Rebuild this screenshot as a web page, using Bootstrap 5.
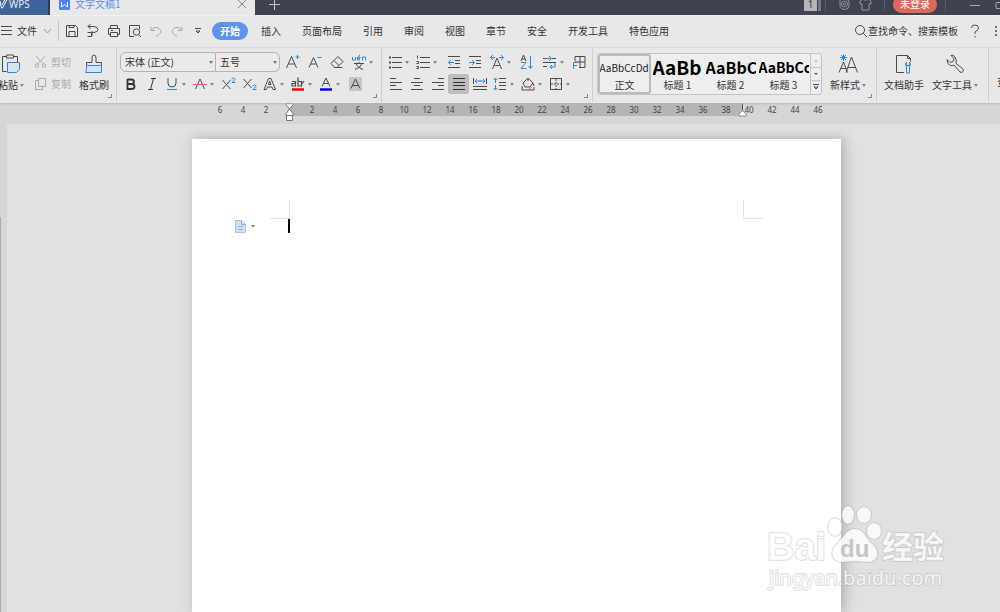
<!DOCTYPE html>
<html lang="zh-CN">
<head>
<meta charset="utf-8">
<meta name="viewport" content="width=device-width, initial-scale=1">
<title>文字文稿1 - WPS</title>
<link href="https://cdn.jsdelivr.net/npm/bootstrap@5.3.0/dist/css/bootstrap.min.css" rel="stylesheet">
<style>
body{font:10px/14px "Noto Sans","Noto Sans CJK SC",sans-serif;color:#333;background:#e1e1e1}
button{border:0;background:none;padding:0;color:inherit}
svg{fill:none;stroke:#4a4a4a;stroke-width:1;flex:none;display:block}
.b{stroke:#2f86dc}
.cjk{font-family:"Noto Sans CJK SC",sans-serif}
/* title bar */
.titlebar{height:15px;background:#404250}
.titlebar .line{height:8px}
.wps-home{width:50px;background:#41639c;color:#e4eaf4;border-right:2px solid #35394a!important}
.doc-tab{width:205px;background:#e8e8e8;color:#5a90ea}
.new-tab{margin-left:14px}
.login-pill{width:44px;height:17px;background:#da6a5c;color:#fff;border-radius:9px}
.num-box{width:13px;height:14px;background:#b5b5b8;color:#333}
.num-side{width:3px;height:14px;background:#77777f;margin-left:1px}
.tsep{width:1px;height:14px;background:#5c5e6a}
.gap-mid{margin-left:12px}
/* menu bar */
.menubar{height:33px;background:#e8e8e8;border-bottom:1px solid #dcdcdc;border-top:1px solid #f0f0f0;padding-bottom:2px}
.msep{width:1px;height:20px;background:#c4c4c4;margin:0 2px 0 6px}
.menubar .chev{margin-left:2px}
.menu-tabs{gap:21px}
.menu-tabs a{color:#333;text-decoration:none}
.menu-tabs a.current{background:#5d93ea;color:#fff;font-weight:700;border-radius:9px;padding:2px 8px;margin-right:-8px}
.search-box{width:94px;border:0;background:none;padding:0;color:#333}
.search-box::placeholder{color:#333;opacity:1}
/* ribbon */
.ribbon{height:55px;background:#e8e8e8;box-shadow:0 1px 2px #b8b8b8;position:relative;z-index:2}
.rgroup{border-right:1px solid #cfcfcf;padding:3px 3px 0;height:54px;position:relative;flex:none}
.corner-mark{position:absolute;right:4px;bottom:4px;width:4px;height:4px;border:solid #888;border-width:0 1px 1px 0}
.rrow{height:22px}
.near{margin-left:2px}
.tb{width:21px;height:20px;flex:none;display:flex;align-items:center;justify-content:center;border-radius:2px}
.tb.drop{width:28px;justify-content:flex-start;padding-left:2px}
.tb.on{background:#bdbdbd}
.drop::after{content:"";border:solid transparent;border-width:3px 2px 0;border-top-color:#888;margin-left:2px;flex:none}
.big{display:flex;flex-direction:column;align-items:center;height:44px;gap:3px;padding-top:2px}
.big .drop{display:flex;align-items:center}
.clip-tools{margin-left:10px}
.off{color:#aaa}.off svg{stroke:#aaa}
.combo{appearance:none;border:1px solid #b4b4b4;height:20px;background:#ebebeb;color:#333;padding:0 0 0 4px;font-size:10px;line-height:16px}
.combo-wrap{position:relative}
.combo-wrap::after{content:"";position:absolute;right:3px;top:9px;border:solid transparent;border-width:3px 2px 0;border-top-color:#777}
.gallery{border:1px solid #c4c4c4;border-radius:3px;background:#eee;height:42px;margin:2px 0 0 1px}
.style-item{width:53px;height:40px;overflow:hidden;display:flex;flex-direction:column;align-items:center;white-space:nowrap}
.style-item.on{border:2px solid #bbb;border-radius:3px}
.sample{width:50px;height:24px;line-height:26px;overflow:hidden;text-align:left;color:#000;font-weight:700}
.style-item.on .sample{font:10px/24px "Noto Sans CJK SC",sans-serif;height:22px;color:#222}
.sample.h-one{font-size:19px}.sample.h-two{font-size:16px}.sample.h-three{font-size:14px}
.scroller{width:11px;border-left:1px solid #c4c4c4}
.scroller button{height:13px;display:flex;align-items:center;justify-content:center;width:10px}
.scroller button+button{border-top:1px solid #c4c4c4}
/* ruler and sheet share one centred column */
.ruler{height:21px;background:#d6d6d6;padding-left:32px}
.sheet-col{width:649px;margin:0 auto}
.ruler .sheet-col{padding-left:17px;height:14px;background:linear-gradient(#b5b5b5,#b5b5b5) 97px 0/453px 13px no-repeat;position:relative}
.ruler span{width:23px;text-align:center;font-size:8px;line-height:14px;color:#444;flex:none}
.mark-l,.mark-r{position:absolute;top:0}.mark-l{left:93px}.mark-r{left:546px}
.work{background:#e1e1e1;position:relative;padding-left:25px}
.edge{width:7px;background:#d6d6d6;padding-top:93px;position:absolute;left:0;top:0;bottom:0}
.edge div{width:1px;height:100%;background:#aaa}
.sheet{background:#fff;margin-top:15px;padding:60px 78px 0;box-shadow:3px 0 12px #aaa}
.crop{width:20px;height:20px;border:0 solid #c8c8c8}
.caret-line{width:2px;height:14px;background:#000}
.paste-opt{margin:0 32px 0 -36px;width:22px;height:14px}
.paste-opt::after{margin-left:4px}
.watermark{position:absolute;right:45px;bottom:12px}
.watermark text,.watermark ellipse,.watermark path{fill:#fff;fill-opacity:.8;stroke:#999;stroke-opacity:.3;stroke-width:2;paint-order:stroke;stroke-linejoin:round}
.watermark .wm-dark{fill:#c6c6c6;fill-opacity:1;stroke:none}
</style>
</head>
<body class="vh-100 d-flex flex-column overflow-hidden">
<header>
 <div class="titlebar d-flex overflow-hidden">
  <button class="wps-home d-flex"><span class="line d-flex align-items-center"><svg width="9" height="14" viewBox="0 0 9 14" style="stroke:#fff"><path d="M0 4l1.500 7h1L7 2.500H5L2 8"/></svg><span>WPS</span></span></button>
  <div class="doc-tab"><div class="line d-flex align-items-center ps-2">
   <svg width="13" height="14" viewBox="0 0 13 14"><rect x="1" y="0" width="11" height="13" rx="1" fill="#4d86ee" stroke="none"/><path d="M3.500 5v5l3-2.500 3 2.500V5" stroke="#fff"/></svg>
   <span class="ms-1 cjk">文字文稿1</span>
   <button class="ms-auto me-2" aria-label="关闭"><svg width="10" height="10" viewBox="0 0 10 10"><path d="M1 1l8 8M9 1l-8 8" stroke="#888"/></svg></button></div></div>
  <button class="line d-flex align-items-center new-tab" aria-label="新建"><svg width="11" height="11" viewBox="0 0 11 11"><path d="M5.500 0v11M0 5.500h11" stroke="#ccc"/></svg></button>
  <div class="line d-flex align-items-center ms-auto">
   <span class="num-box text-center">1</span><span class="num-side"></span><span class="tsep ms-1"></span>
   <svg class="gap-mid" width="13" height="14" viewBox="0 0 13 14" style="stroke:#92939c"><path d="M2 0v9q0 3 5 3.500 4-.500 4-4V4L8 2"/><circle cx="6.500" cy="7" r="3"/><circle cx="6.500" cy="7" r="1"/></svg>
   <svg class="ms-2" width="13" height="14" viewBox="0 0 13 14" style="stroke:#92939c"><path d="M4 2L1 4v3h2v6h7V7h2V4L9 2q-2.500 3-5 0z"/></svg>
   <span class="tsep gap-mid me-2"></span>
   <button class="login-pill cjk">未登录</button>
   <span class="tsep ms-2 me-4"></span>
   <svg width="30" height="14" viewBox="0 0 30 14"><path d="M0 8.500h10M30 5.500h-3q-1 0-1 1v4q0 1 1 1h3" stroke="#aaa"/></svg>
  </div>
 </div>
 <nav class="menubar d-flex align-items-center cjk">
  <button class="d-flex align-items-center gap-1"><svg width="13" height="12" viewBox="0 0 13 12"><path d="M1 1.500h11M1 5.500h11M1 9.500h11"/></svg><span>文件</span><svg class="chev" width="9" height="8" viewBox="0 0 9 8"><path d="M1 2l3.500 4L8 2" stroke="#999"/></svg></button>
  <span class="msep"></span>
  <button class="tb" aria-label="保存"><svg width="14" height="14" viewBox="0 0 14 14"><path d="M1.500 1.500h9l2 2v9h-11zM4 12.500v-5h6v5M4 1.500v2h5v-2"/></svg></button>
  <button class="tb" aria-label="输出"><svg width="14" height="14" viewBox="0 0 14 14"><path d="M2 2.500h6q4 .500 4 3t-4 3H6M4.500 0L2 2.500 4.500 5M1.500 8.500h4v4h-4M6 7v5"/></svg></button>
  <button class="tb" aria-label="打印"><svg width="14" height="14" viewBox="0 0 14 14"><path d="M3.500 4.500v-3h7v3M3.500 10.500h-2v-6h11v6h-2M3.500 8.500h7v4h-7zM4 6.500h2"/></svg></button>
  <button class="tb" aria-label="打印预览"><svg width="14" height="14" viewBox="0 0 14 14"><path d="M6 12.500H1.500v-11h10V5M10.500 10.500L13 13"/><circle cx="8.500" cy="8" r="3.200"/></svg></button>
  <button class="tb off" aria-label="撤销"><svg width="14" height="14" viewBox="0 0 14 14"><path d="M2 2.500v4h4M2 6.500q4-5 8-2t0 6l-3 2"/></svg></button>
  <button class="tb off" aria-label="恢复"><svg width="14" height="14" viewBox="0 0 14 14"><path d="M12 2.500v4H8M12 6.500q-4-5-8-2t0 6l3 2"/></svg></button>
  <button class="tb me-1" aria-label="更多"><svg width="8" height="8" viewBox="0 0 8 8"><path d="M1 1.500h6M2 4l2 2 2-2z"/></svg></button>
  <div class="menu-tabs d-flex align-items-center text-nowrap"><a class="current" href="#">开始</a><a href="#">插入</a><a href="#">页面布局</a><a href="#">引用</a><a href="#">审阅</a><a href="#">视图</a><a href="#">章节</a><a href="#">安全</a><a href="#">开发工具</a><a href="#">特色应用</a></div>
  <label class="d-flex align-items-center ms-auto"><svg width="14" height="14" viewBox="0 0 14 14"><circle cx="6" cy="6" r="4.500"/><path d="M9 9l4 4"/></svg><input class="search-box" type="text" placeholder="查找命令、搜索模板" aria-label="查找命令"></label>
  <button class="mx-2" aria-label="帮助"><svg width="10" height="14" viewBox="0 0 10 14"><path d="M1.500 4q0-3 3.500-3t3.500 3Q8.500 6 5 8v2M5 12v1.500"/></svg></button>
  <button class="ms-1" aria-label="更多"><svg width="8" height="14" viewBox="0 0 8 14"><path d="M4 2v2M4 6v2M4 10v2" stroke-width="1.500"/></svg></button>
 </nav>
 <div class="ribbon d-flex overflow-hidden cjk">
  <section class="rgroup d-flex ps-0" style="width:117px">
   <button class="big text-nowrap" style="margin-left:-2px"><svg width="22" height="22" viewBox="0 0 22 22"><path d="M7 3.500H2.500v15h4M13 3.500h4.500V9M6.500 2h7v3h-7z"/><path class="b" d="M7.500 9.500h12v7l-3 3h-9z" fill="#d5e4f3"/></svg><span class="drop">粘贴</span></button>
   <div class="clip-tools">
    <button class="rrow off d-flex align-items-center gap-1"><svg width="13" height="14" viewBox="0 0 13 14"><path d="M2 1l7.500 8M11 1L3.500 9"/><circle cx="3" cy="10.500" r="1.700"/><circle cx="10" cy="10.500" r="1.700"/></svg>剪切</button>
    <button class="rrow off d-flex align-items-center gap-1"><svg width="13" height="14" viewBox="0 0 13 14"><path d="M4.500 1.500h7v8h-7zM4.500 3.500h-3v9h7v-3"/></svg>复制</button>
   </div>
   <button class="big text-nowrap ms-2"><svg width="20" height="22" viewBox="0 0 20 22"><path d="M2.500 12V9.500h5.500V5q0-3 2-3t2 3v4.500h5.500V12"/><path class="b" d="M2.500 12.500h15v7h-16l1-3z" fill="#d5e4f3"/></svg>格式刷</button>
   <i class="corner-mark"></i>
  </section>
  <section class="rgroup" style="width:265px">
   <div class="rrow d-flex align-items-center">
    <div class="combo-wrap"><select class="combo rounded-start cjk" style="width:96px" aria-label="字体"><option>宋体 (正文)</option></select></div>
    <div class="combo-wrap"><select class="combo rounded-end border-start-0 cjk" style="width:64px" aria-label="字号"><option>五号</option></select></div>
    <div class="d-flex near" style="gap:1px">
    <button class="tb" aria-label="增大字号"><svg width="16" height="16" viewBox="0 0 16 16"><path d="M1.500 14L6.500 2.500 11.500 14M3.500 10h6"/><path class="b" d="M12.500 1v4M10.500 3h4"/></svg></button>
    <button class="tb" aria-label="减小字号"><svg width="16" height="16" viewBox="0 0 16 16"><path d="M2 13.500L6.500 3.500l4.500 10M4 10h5"/><path class="b" d="M10.500 3.500h4"/></svg></button>
    <button class="tb" aria-label="清除格式"><svg width="16" height="16" viewBox="0 0 16 16"><path d="M2 9.500l7-7 5 5-6 6H5.500zM5 6.500l5 5M5.500 13.500H13"/></svg></button>
    <button class="tb drop" aria-label="拼音指南"><svg width="17" height="17" viewBox="0 0 17 17"><path d="M4 9.500h10M9 8v2M5 15.500q6-2 7-6M6 10q2 4 7 5.500"/><path class="b" d="M2.500 3v3h3V3M7 4.500h3V3H7.500v3H10M9 2l1-1.500M12.500 6.500V3h3v3.500"/></svg></button></div>
   </div>
   <div class="rrow d-flex align-items-center">
    <button class="tb" aria-label="加粗"><svg width="16" height="16" viewBox="0 0 16 16"><path d="M4.500 3v10h4q3 0 3-2.500T8.500 8h-4M4.500 3.500h3.500q3 0 3 2.200T8 8" stroke="#333" stroke-width="1.800"/></svg></button>
    <button class="tb" aria-label="倾斜"><svg width="16" height="16" viewBox="0 0 16 16"><path d="M7 2.500h5M4 13.500h5M9.500 2.500l-3 11" stroke="#333"/></svg></button>
    <button class="tb drop" aria-label="下划线"><svg width="16" height="16" viewBox="0 0 16 16"><path d="M4 2v5q0 4 4 4t4-4V2"/><path class="b" d="M3 13.500h10"/></svg></button>
    <button class="tb drop" aria-label="删除线"><svg width="16" height="16" viewBox="0 0 16 16"><path d="M3.500 13L8 3l4.500 10"/><path d="M1 8.500h14" stroke="#e06060"/></svg></button>
    <button class="tb" aria-label="上标"><svg width="16" height="16" viewBox="0 0 16 16"><path d="M1.500 4l8 9M9.500 4l-8 9"/><path class="b" d="M11 3.500q0-1.500 1.500-1.500t1.500 1.500L11 6.500h3.500"/></svg></button>
    <button class="tb" aria-label="下标"><svg width="16" height="16" viewBox="0 0 16 16"><path d="M1.500 3l8 9M9.500 3l-8 9"/><path class="b" d="M11 10.500Q11 9 12.500 9t1.500 1.500L11 13.500h3.500"/></svg></button>
    <button class="tb drop" aria-label="文字效果"><svg width="16" height="16" viewBox="0 0 16 16"><path d="M2 13.500L6.500 2.500h2.500L13.500 13.500H11L10 11H5.500l-1 2.500zM6.500 8.500l1.250-3.500L9 8.500z"/></svg></button>
    <button class="tb drop" aria-label="突出显示"><svg width="16" height="16" viewBox="0 0 16 16"><path d="M2 5.500h3.500V10H2V7.500h3.500M8 1.500V10h3.500V5.500H8M11 9l3-4" stroke-width="1.200"/><path d="M2 13.500h12" stroke="#f00" stroke-width="2.500"/></svg></button>
    <button class="tb drop" aria-label="字体颜色"><svg width="16" height="16" viewBox="0 0 16 16"><path d="M4 10.500L8 2l4 8.500M5.500 7.500h5"/><path d="M2 13.500h12" stroke="#00f" stroke-width="2.500"/></svg></button>
    <button class="tb" aria-label="字符底纹"><svg width="16" height="16" viewBox="0 0 16 16"><path d="M2 1h13v14H2z" fill="#c6c6c6" stroke="none"/><path d="M4 12.500L8.500 3l4.500 9.500M5.500 9.500h6"/></svg></button>
   </div><i class="corner-mark"></i>
  </section>
  <section class="rgroup" style="width:211px">
   <div class="rrow d-flex align-items-center">
    <button class="tb drop" aria-label="项目符号"><svg width="16" height="16" viewBox="0 0 16 16"><path d="M5 3.500h10M5 8.500h10M5 13.500h10"/><path d="M2 3.500h2M2 8.500h2M2 13.500h2" stroke-width="2"/></svg></button>
    <button class="tb drop" aria-label="编号"><svg width="16" height="16" viewBox="0 0 16 16"><path d="M5 3.500h10M5 8.500h10M5 13.500h10M2.500 1.500v3M1.500 7.500h2v2h-2M1.500 12.500h2v2h-2"/></svg></button>
    <button class="tb near" aria-label="减少缩进"><svg width="16" height="16" viewBox="0 0 16 16"><path d="M2 2.500h12M9 6.500h5M9 9.500h5M2 13.500h12"/><path class="b" d="M8 8.500H2.500M5 6L2.500 8.500 5 11"/></svg></button>
    <button class="tb" aria-label="增加缩进"><svg width="16" height="16" viewBox="0 0 16 16"><path d="M2 2.500h12M9 6.500h5M9 9.500h5M2 13.500h12"/><path class="b" d="M2 8.500h5.500M5 6l2.500 2.500L5 11"/></svg></button>
    <button class="tb drop near" aria-label="字符缩放"><svg width="16" height="16" viewBox="0 0 16 16"><path d="M3.500 15L8 4l4.500 11M5.500 11.500h5"/><path class="b" d="M6 3.500H1.500M4 1L1.500 3.500 4 6M10 3.500h4.500M12 1l2.500 2.500L12 6"/></svg></button>
    <button class="tb" aria-label="排序"><svg width="16" height="16" viewBox="0 0 16 16"><path d="M3 7l2.500-6L8 7M4 5h3"/><path class="b" d="M3 8.500h5l-5 6h5.500M12.500 2v12M10.500 12l2 2.500 2-2.500"/></svg></button>
    <button class="tb drop ms-1" aria-label="换行"><svg width="16" height="16" viewBox="0 0 16 16"><path d="M1 4.500h3M10 4.500h4M1 8.500h13M1 12.500h4"/><path class="b" d="M3 4.500h6M7 2l2.500 2.500L7 7M13 9v4H8M10 11l-2 2 2 2"/></svg></button>
    <button class="tb" aria-label="表格边框"><svg width="16" height="16" viewBox="0 0 16 16"><path d="M4 7V2.500h10v11H8M9 2.500v11M4 8h10"/><path class="b" d="M2.500 15V8.500H7M2.500 11.500H6"/></svg></button>
   </div>
   <div class="rrow d-flex align-items-center">
    <button class="tb" aria-label="左对齐"><svg width="16" height="16" viewBox="0 0 16 16"><path d="M2 2.500h6M2 6.500h12M2 9.500h6M2 13.500h12"/></svg></button>
    <button class="tb" aria-label="居中"><svg width="16" height="16" viewBox="0 0 16 16"><path d="M5 2.500h6M2 6.500h12M5 9.500h6M2 13.500h12"/></svg></button>
    <button class="tb" aria-label="右对齐"><svg width="16" height="16" viewBox="0 0 16 16"><path d="M8 2.500h6M2 6.500h12M8 9.500h6M2 13.500h12"/></svg></button>
    <button class="tb on" aria-label="两端对齐"><svg width="16" height="16" viewBox="0 0 16 16" style="stroke:#333"><path d="M2 2.500h12M2 6.500h12M2 9.500h12M2 13.500h12"/></svg></button>
    <button class="tb" aria-label="分散对齐"><svg width="16" height="16" viewBox="0 0 16 16"><path d="M1.500 2v6M14.500 2v6M1 10.500h14M1 13.500h14"/><path class="b" d="M3 5h10M5 3L3 5l2 2M11 3l2 2-2 2M8 4v2"/></svg></button>
    <button class="tb drop" aria-label="行距"><svg width="16" height="16" viewBox="0 0 16 16"><path d="M7 2.500h7M7 6.500h7M7 9.500h7M7 13.500h7"/><path class="b" d="M3.500 2v5M1.500 4l2-2 2 2M3.500 9v5M1.500 12l2 2 2-2"/></svg></button>
    <button class="tb drop" aria-label="底纹颜色"><svg width="16" height="16" viewBox="0 0 16 16"><path d="M3 7l5-5 5 5-3 4H5zM8 2v3M13 7l1 3M2 10v4h12v-3"/><path d="M8 14l4-3" stroke="#e06060"/></svg></button>
    <button class="tb drop" aria-label="边框"><svg width="16" height="16" viewBox="0 0 16 16"><path d="M2.500 2.500h11v11h-11z"/><path d="M8 3v10M3 8h10" stroke-dasharray="2 1"/></svg></button>
   </div><i class="corner-mark"></i>
  </section>
  <section class="rgroup d-flex" style="width:284px">
   <div class="gallery d-flex">
    <button class="style-item on"><span class="sample">AaBbCcDd</span><span>正文</span></button>
    <button class="style-item"><span class="sample h-one">AaBb</span><span>标题 1</span></button>
    <button class="style-item"><span class="sample h-two">AaBbC</span><span>标题 2</span></button>
    <button class="style-item"><span class="sample h-three">AaBbCc</span><span>标题 3</span></button>
    <div class="scroller"><button aria-label="上"><svg width="6" height="4" viewBox="0 0 6 4"><path d="M1 3l2-2 2 2z" fill="#bbb" stroke="none"/></svg></button><button aria-label="下"><svg width="6" height="4" viewBox="0 0 6 4"><path d="M1 1l2 2 2-2z" fill="#555" stroke="none"/></svg></button><button aria-label="展开"><svg width="6" height="6" viewBox="0 0 6 6"><path d="M0 .500h6M1 3l2 2 2-2z"/></svg></button></div>
   </div>
   <button class="big text-nowrap ms-2"><svg width="22" height="22" viewBox="0 0 22 22"><path d="M2 19.500L6.500 9l4 10.500M4 15.500h5M9 19.500L14.500 4 20.500 19.500M11 14.500h7.500"/><path class="b" d="M6.500 1v7M3 4.500h7M4 2l5 5M9 2L4 7"/></svg><span class="drop">新样式</span></button>
   <i class="corner-mark"></i>
  </section>
  <section class="rgroup d-flex gap-2 text-nowrap" style="width:112px">
   <button class="big ms-1"><svg width="22" height="22" viewBox="0 0 22 22"><path d="M11 19.500H3.500v-17h11l3 3v3M14.500 2.500v3h3"/><path class="b" d="M13.500 9q-2 2 0 5v6h3v-6q2-3 0-5v3.500h-3z"/></svg>文档助手</button>
   <button class="big"><svg width="22" height="22" viewBox="0 0 22 22"><path d="M7 2.500l3 3-1 3-3 1-3-3q0 5 3.500 6 2 .500 3.500-.500l6 7q2 1 3-.500t-.500-3L12 10.500Q13 7 11 4T7 2.500z"/></svg><span class="drop">文字工具</span></button>
  </section>
  <button class="big text-nowrap ms-2"><svg width="20" height="22"></svg>查找替换</button>
 </div>
</header>
<div class="ruler"><div class="sheet-col d-flex"><span>6</span><span>4</span><span>2</span><span></span><span>2</span><span>4</span><span>6</span><span>8</span><span>10</span><span>12</span><span>14</span><span>16</span><span>18</span><span>20</span><span>22</span><span>24</span><span>26</span><span>28</span><span>30</span><span>32</span><span>34</span><span>36</span><span>38</span><span>40</span><span>42</span><span>44</span><span>46</span>
 <svg class="mark-l" width="9" height="19" viewBox="0 0 9 19"><path d="M1 .500h7v1.500L4.500 6 1 2zM4.500 6L8 10.500v2H1v-2zM1.500 12.500h6v5h-6z" fill="#fff" stroke="#777"/></svg>
 <svg class="mark-r" width="9" height="14" viewBox="0 0 9 14"><path d="M4.500 0v8"/><path d="M4.500 7.500L8 11v2H1v-2z" fill="#fff" stroke="#888"/></svg></div></div>
<main class="work flex-grow-1 d-flex ps-4 overflow-hidden">
 <div class="edge"><div></div></div>
 <div class="ms-2 flex-grow-1 d-flex"><article class="sheet-col sheet">
  <div class="d-flex justify-content-between"><div class="crop border-end border-bottom"></div><div class="crop border-start border-bottom"></div></div>
  <div class="d-flex align-items-center"><button class="paste-opt d-flex align-items-center drop" aria-label="粘贴选项"><svg width="13" height="13" viewBox="0 0 13 13"><path d="M1.500.500h6l4 4v8h-10z" fill="#d3e1f5" stroke="#a9c1e6"/><path d="M7.500.500v4h4M4 6.500h5M4 9.500h5" stroke="#8fb0df"/></svg></button><span class="caret-line"></span></div>
 </article></div>
 <svg class="watermark" width="190" height="100" viewBox="0 0 190 100">
  <text x="2" y="60" font-family="Liberation Sans" font-weight="700" font-size="38">Bai</text>
  <ellipse cx="70" cy="27" rx="7" ry="9"/><ellipse cx="83" cy="15" rx="6" ry="9"/><ellipse cx="99" cy="15" rx="7" ry="8"/><ellipse cx="109" cy="31" rx="7" ry="8"/>
  <path d="M90 29c9 0 10 8 17 15 8 6 7 18-4 18-5 0-8-1-13-1s-8 1-13 1c-11 0-12-11-6-17 8-8 10-16 19-16z"/>
  <text class="wm-dark" x="75" y="57" font-family="Liberation Sans" font-weight="700" font-size="24">du</text>
  <text x="117" y="58" font-family="Noto Sans CJK SC" font-weight="700" font-size="31">经验</text>
  <text x="4" y="85" font-family="Noto Sans" font-size="20">jingyan.baidu.com</text>
 </svg>
</main>
<script src="https://cdn.jsdelivr.net/npm/bootstrap@5.3.0/dist/js/bootstrap.bundle.min.js"></script>
</body>
</html>
